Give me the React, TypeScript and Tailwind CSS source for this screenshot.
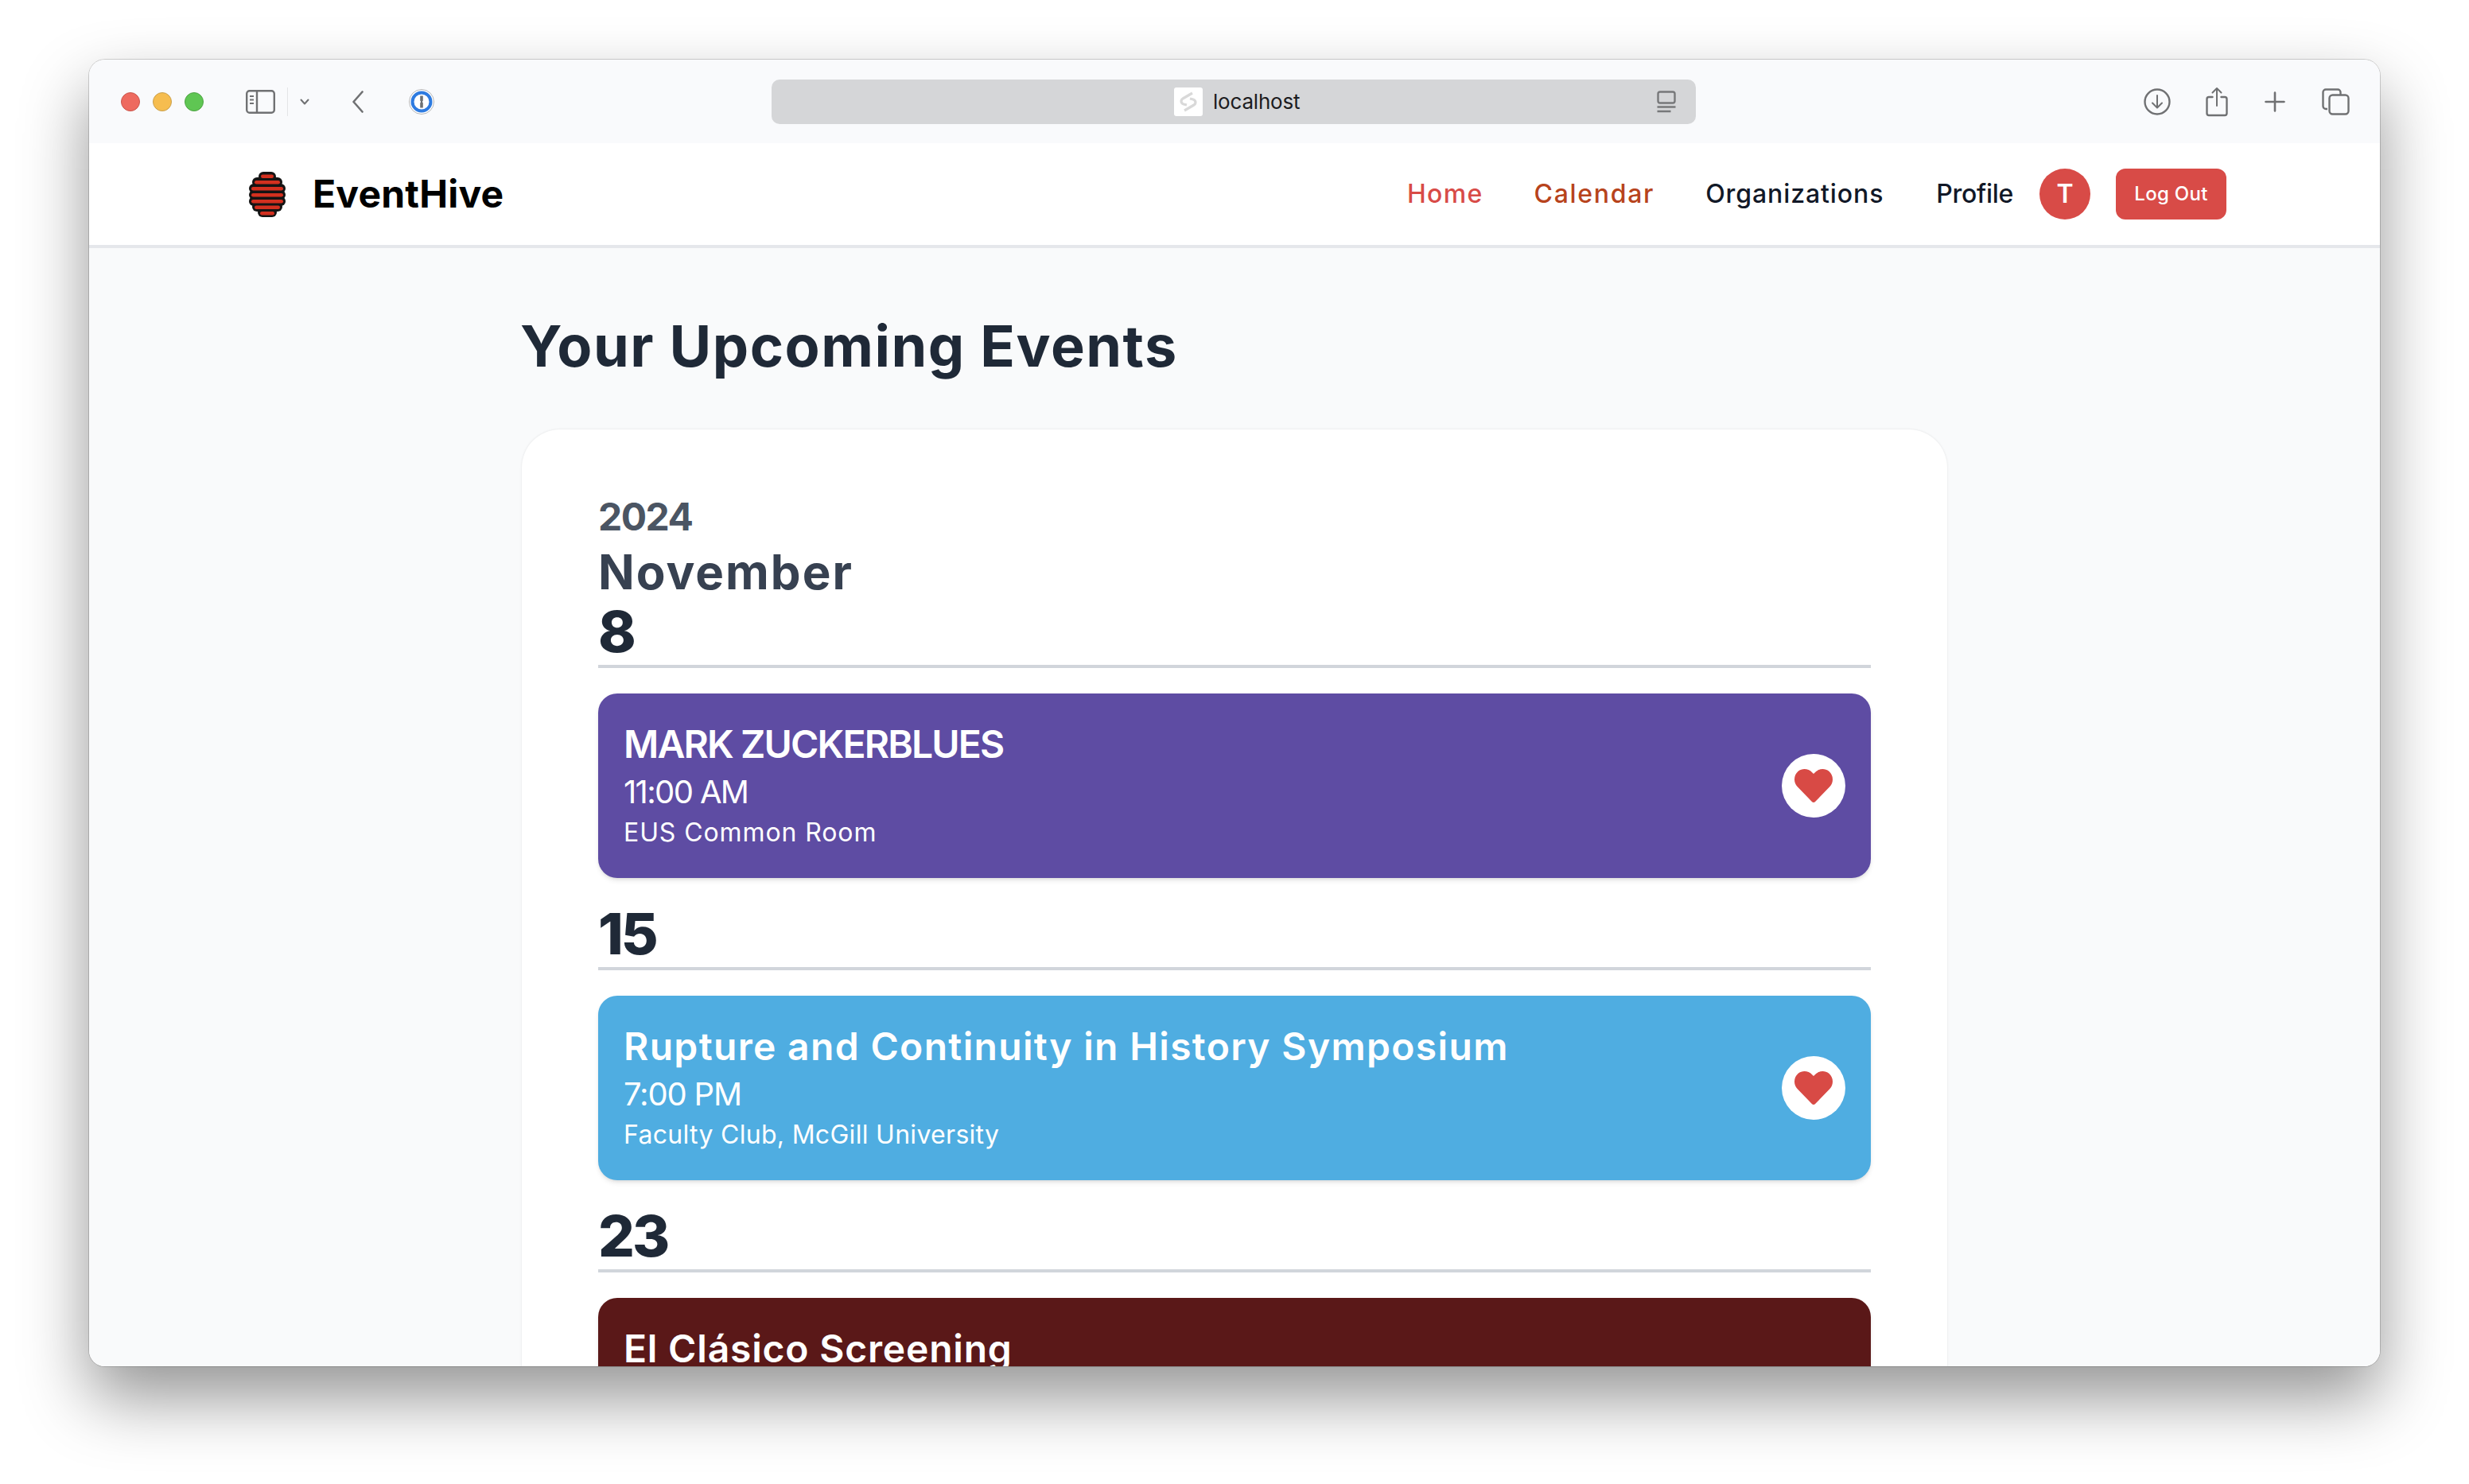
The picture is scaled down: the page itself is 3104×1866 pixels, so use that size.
import React from 'react';
import { FaHeart } from 'react-icons/fa';

type EventItem = {
  day: number;
  title: string;
  titleTrack: string;
  time?: string;
  timeTrack?: string;
  location?: string;
  locationTrack?: string;
  color: string;
  height: string;
};

const EVENTS: EventItem[] = [
  {
    day: 8,
    title: 'MARK ZUCKERBLUES',
    titleTrack: 'tracking-[-1.85px]',
    time: '11:00 AM',
    timeTrack: 'tracking-[-1.65px]',
    location: 'EUS Common Room',
    locationTrack: 'tracking-[0.9px]',
    color: 'bg-[#5e4ca3]',
    height: 'h-[232px]',
  },
  {
    day: 15,
    title: 'Rupture and Continuity in History Symposium',
    titleTrack: 'tracking-[1.33px]',
    time: '7:00 PM',
    timeTrack: 'tracking-[-1.2px]',
    location: 'Faculty Club, McGill University',
    locationTrack: 'tracking-[0.3px]',
    color: 'bg-[#4fade1]',
    height: 'h-[232px]',
  },
  // the rest of this card is below the fold
  { day: 23, title: 'El Clásico Screening', titleTrack: 'tracking-[0.8px]', color: 'bg-[#5a1818]', height: 'h-[280px]' },
];

const HiveLogo = () => (
  <svg width="46" height="59" viewBox="0 0 46 59" className="shrink-0">
    {[
      [15, 7, 16],
      [7, 14, 32],
      [3, 22, 40],
      [3, 30, 40],
      [3, 38, 40],
      [7, 45, 32],
      [14, 52, 18],
    ].map(([x, y, w], i) => (
      <rect key={i} x={x - 3} y={y - 6} width={w + 6} height="12" rx="6" fill="#141414" />
    ))}
    {[
      [15, 4.5, 16],
      [7, 12, 32],
      [3, 20, 40],
      [3, 28, 40],
      [3, 36, 40],
      [7, 43.5, 32],
      [14, 51, 18],
    ].map(([x, y, w], i) => (
      <rect key={i} x={x} y={y} width={w} height="4.4" rx="2.2" fill="#d3301f" />
    ))}
  </svg>
);

const TitleBar = () => (
  <div className="h-[105px] shrink-0 bg-[#f9fafc] flex items-center pl-[40px] pt-[1px] text-[#707173]">
    <div className="flex gap-4">
      <span className="w-6 h-6 rounded-full bg-[#ee6a5f] border border-[#c9554c]" />
      <span className="w-6 h-6 rounded-full bg-[#f6bd4f] border border-[#c9a04e]" />
      <span className="w-6 h-6 rounded-full bg-[#5fc653] border border-[#4ea344]" />
    </div>
    <svg width="37" height="30" viewBox="0 0 37 30" fill="none" stroke="currentColor" strokeWidth="2.4" className="ml-[53px]">
      <rect x="1.2" y="1.2" width="34.6" height="27.6" rx="3.5" />
      <path d="M14 1.5v27" />
      <path d="M5 8h5M5 12.5h5M5 17h5" strokeWidth="1.8" />
    </svg>
    <span className="ml-[15px] w-px h-[36px] bg-[#e4e5e7]" />
    <svg width="12" height="8" viewBox="0 0 12 8" fill="none" stroke="currentColor" strokeWidth="2" strokeLinecap="round" strokeLinejoin="round" className="ml-[15px]">
      <path d="M1.5 1.5 6 6.5l4.5-5" />
    </svg>
    <svg width="14" height="28" viewBox="0 0 14 28" fill="none" stroke="currentColor" strokeWidth="2.6" strokeLinecap="round" strokeLinejoin="round" className="ml-[54px]">
      <path d="M12.5 1.5 1.5 14l11 12.5" />
    </svg>
    <svg width="32" height="32" viewBox="0 0 32 32" className="ml-[57px]">
      <circle cx="16" cy="16" r="15.5" fill="#fff" stroke="#b5b6b8" />
      <circle cx="16" cy="16" r="11.5" fill="#fff" stroke="#2e7be0" strokeWidth="4" />
      <path d="M14.2 8.5h3.6v6l-1 1.5 1 1.5v6h-3.6v-6l1-1.5-1-1.5z" fill="#6e7173" />
    </svg>

    <div className="ml-[424px] w-[1162px] h-[56px] rounded-[10px] bg-[#d5d6d8] flex items-center pl-[506px]">
      <span className="w-[36px] h-[36px] rounded-[3px] bg-white flex items-center justify-center">
        <svg width="24" height="28" viewBox="0 0 24 28" fill="none" stroke="#d9d9d9" strokeWidth="3.2" strokeLinejoin="round">
          <path d="M17 3 5 10c-3 2-2.5 6 1 7l4 1" />
          <path d="M7 25l12-7c3-2 2.5-6-1-7l-4-1" />
        </svg>
      </span>
      <span className="ml-[13px] text-[26px] leading-none text-[#1c1c1e] tracking-[-0.2px]">localhost</span>
      <svg width="24" height="28" viewBox="0 0 24 28" fill="none" stroke="#77787a" className="ml-[449px]">
        <rect x="1.5" y="1.5" width="21" height="14" rx="2.5" strokeWidth="2.4" />
        <path d="M0.5 20.5h23" strokeWidth="2.4" />
        <path d="M0.5 26h17" strokeWidth="2.4" />
      </svg>
    </div>

    <svg width="34" height="34" viewBox="0 0 34 34" fill="none" stroke="currentColor" strokeWidth="2.4" strokeLinecap="round" strokeLinejoin="round" className="ml-[563px]">
      <circle cx="17" cy="17" r="15.5" />
      <path d="M17 9v15M11 18.5l6 6 6-6" strokeWidth="2" />
    </svg>
    <svg width="28" height="38" viewBox="0 0 28 38" fill="none" stroke="currentColor" strokeWidth="2.4" strokeLinecap="round" strokeLinejoin="round" className="ml-[44px]">
      <path d="M8.5 13H4a2.5 2.5 0 0 0-2.5 2.5v18A2.5 2.5 0 0 0 4 36h20a2.5 2.5 0 0 0 2.5-2.5v-18A2.5 2.5 0 0 0 24 13h-4.5" />
      <path d="M14 24V2M8.5 7.5 14 2l5.5 5.5" strokeWidth="2" />
    </svg>
    <svg width="26" height="26" viewBox="0 0 26 26" fill="none" stroke="currentColor" strokeWidth="2.6" strokeLinecap="round" className="ml-[46px]">
      <path d="M13 1.5v23M1.5 13h23" />
    </svg>
    <svg width="35" height="34" viewBox="0 0 35 34" fill="none" stroke="currentColor" strokeWidth="2.4" className="ml-[46px]">
      <path d="M7 26H5a3.5 3.5 0 0 1-3.5-3.5V5A3.5 3.5 0 0 1 5 1.5h15A3.5 3.5 0 0 1 23.5 5v3" />
      <rect x="9.5" y="8.5" width="24" height="24" rx="4" />
    </svg>
  </div>
);

const NavBar = () => (
  <nav className="h-[132px] shrink-0 bg-white border-b-4 border-[#e5e7eb] flex items-center pl-[201px] pr-[193px]">
    <HiveLogo />
    <span className="ml-[34px] text-[48px] font-bold leading-none tracking-[0.2px] text-black">EventHive</span>
    <div className="ml-auto flex items-center text-[32px] font-medium text-[#111827]">
      <a className="text-[#d84b47] tracking-[1.3px]">Home</a>
      <a className="ml-[64px] text-[#b7431c] tracking-[1.7px]">Calendar</a>
      <a className="ml-[64px] tracking-[0.9px]">Organizations</a>
      <a className="ml-[66px] tracking-[-0.3px]">Profile</a>
      <span className="ml-[33px] w-[64px] h-[64px] rounded-full bg-[#d84b47] text-white flex items-center justify-center text-[32px] font-semibold">T</span>
      <button className="ml-[32px] w-[139px] h-[64px] rounded-[12px] bg-[#d84b47] text-white text-[24px] font-medium tracking-[0.3px]">Log Out</button>
    </div>
  </nav>
);

const EventCard = ({ event }: { event: EventItem }) => (
  <div className={`${event.color} ${event.height} rounded-[24px] shadow-md flex items-center justify-between px-[32px] text-white`}>
    <div className="self-start pt-[32px]">
      <div className={`text-[48px] leading-[64px] font-semibold ${event.titleTrack}`}>{event.title}</div>
      {event.time && <div className={`text-[40px] leading-[56px] ${event.timeTrack}`}>{event.time}</div>}
      {event.location && <div className={`text-[32px] leading-[46px] ${event.locationTrack}`}>{event.location}</div>}
    </div>
    <button className="w-[80px] h-[80px] shrink-0 rounded-full bg-white flex items-center justify-center text-[#d84a45]">
      <FaHeart className="w-[48px] h-[48px]" />
    </button>
  </div>
);

export default function App() {
  return (
    <div className="min-h-screen bg-white pt-[75px] pl-[112px] overflow-hidden font-['Inter',sans-serif]">
      <div className="w-[2880px] h-[1643px] rounded-[20px] bg-white overflow-hidden flex flex-col shadow-[0_0_0_1px_rgba(0,0,0,0.16),0_40px_84px_rgba(0,0,0,0.42)]">
        <TitleBar />
        <NavBar />
        <main className="flex-1 bg-[#f9fafb] overflow-hidden">
          <div className="w-[1792px] mx-auto pt-[73px]">
            <h1 className="-ml-[2px] text-[72px] leading-[100px] font-bold text-[#1f2937] tracking-[1.5px] mb-[55px]">Your Upcoming Events</h1>
            <div className="bg-white rounded-[48px] shadow-[0_0_3px_rgba(0,0,0,0.1)] px-[96px] pt-[80px]">
              <div className="text-[48px] leading-[60px] font-bold text-[#4b5563] tracking-[-1.5px]">2024</div>
              <div className="text-[60px] leading-[78px] font-bold text-[#374151] tracking-[2px]">November</div>
              {EVENTS.map((event, i) => (
                <div key={event.day}>
                  <div className={`${i > 0 ? 'mt-[34px]' : ''} text-[72px] leading-[72px] font-extrabold text-[#1f2937] tracking-[-3px] pb-[6px] border-b-4 border-[#d1d5db]`}>
                    {event.day}
                  </div>
                  <div className="mt-[32px]">
                    <EventCard event={event} />
                  </div>
                </div>
              ))}
            </div>
          </div>
        </main>
      </div>
    </div>
  );
}
